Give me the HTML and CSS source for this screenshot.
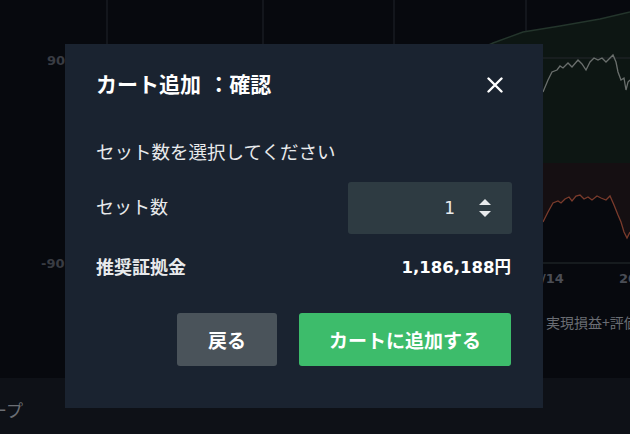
FILE: index.html
```html
<!DOCTYPE html>
<html lang="ja">
<head>
  <meta charset="UTF-8" />
  <meta name="viewport" content="width=device-width, initial-scale=1.0"/>
  <title>カート追加：確認</title>
  <link rel="stylesheet" href="styles.css">
</head>
<body>

  <div class="app">
    <div class="chart">
      <!-- 背景のチャート（モーダルの後ろ） -->
      <svg class="chart-svg" width="630" height="378" viewBox="0 0 630 378">
        <g class="grid">
          <line x1="107" y1="0" x2="107" y2="378"/>
          <line x1="263" y1="0" x2="263" y2="378"/>
          <line x1="394" y1="0" x2="394" y2="378"/>
          <line x1="526" y1="0" x2="526" y2="378"/>
        </g>
        <polygon class="area-up" points="478,50 493,43 523,32 560,26 600,19 630,12 630,163 478,163"/>
        <polyline class="edge-up" points="478,50 493,43 523,32 560,26 600,19 630,12"/>
        <line class="hline" x1="480" y1="58" x2="630" y2="58"/>
        <polygon class="area-down" points="543,163 630,163 630,232 627,238 624,232 621,222 618,215 614,205 610,196 606,200 601,198 597,196 592,200 588,197 584,199 580,195 576,196 572,201 569,197 565,199 561,203 558,201 553,203 548,212 543,222"/>
        <polyline class="line-gray" points="543,92 548,80 552,72 557,70 560,66 563,68 568,63 572,67 578,60 582,64 586,70 590,62 594,58 598,60 602,58 606,62 610,58 613,55 616,62 618,72 621,80 624,78 626,90 628,82 630,80"/>
        <polyline class="line-red" points="543,222 548,212 553,203 558,201 561,203 565,199 569,197 572,201 576,196 580,195 584,199 588,197 592,200 597,196 601,198 606,200 610,196 614,205 618,215 621,222 624,232 627,238 630,232"/>
        <line class="hline" x1="543" y1="263" x2="630" y2="263"/>
        <text class="axis" x="47" y="65">90</text>
        <text class="axis" x="41" y="268">-90</text>
        <text class="date" x="541" y="283">/14</text>
        <text class="date" x="619" y="283">20</text>
        <text class="legend" x="546" y="328">実現損益+評価</text>
      </svg>
    </div>
    <div class="tabbar"><span class="tab">ープ</span></div>
  </div>

  <div class="overlay">
    <div class="modal">
      <div class="modal-head">
        <h2 class="modal-title">カート追加 ：確認</h2>
        <button type="button" class="close" aria-label="閉じる">
          <svg width="16" height="16" viewBox="0 0 16 16">
            <path d="M1.5 1.5 L14.5 14.5 M14.5 1.5 L1.5 14.5" stroke="#fff" stroke-width="2.4" stroke-linecap="round"/>
          </svg>
        </button>
      </div>

      <p class="lead">セット数を選択してください</p>

      <div class="row">
        <span class="label">セット数</span>
        <div class="stepper">
          <span class="num">1</span>
          <svg class="spin" width="14" height="20" viewBox="0 0 14 20">
            <polygon points="1,7 7,1 13,7" fill="#e8eaec"/>
            <polygon points="1,13 13,13 7,19" fill="#e8eaec"/>
          </svg>
        </div>
      </div>

      <div class="row row-margin">
        <span class="label strong">推奨証拠金</span>
        <span class="amount">1,186,188円</span>
      </div>

      <div class="actions">
        <button type="button" class="btn back">戻る</button>
        <button type="button" class="btn add">カートに追加する</button>
      </div>
    </div>
  </div>

</body>
</html>
```

FILE: styles.css
```css
* {
  box-sizing: border-box;
}
body {
  margin: 0;
  width: 630px;
  height: 434px;
  overflow: hidden;
  position: relative;
  background: #07090e;
  color: #e8eaec;
  font-family: "DejaVu Sans", "Noto Sans CJK JP", sans-serif;
}
.app {
  height: 434px;
  display: flex;
  flex-direction: column;
}
.chart {
  height: 378px;
}
.chart-svg {
  display: block;
}
.grid line {
  stroke: #181b22;
  stroke-width: 1.5;
}
.area-up {
  fill: #0d1613;
}
.edge-up {
  fill: none;
  stroke: #24352c;
  stroke-width: 1.5;
}
.hline {
  stroke: #1d2224;
  stroke-width: 1.5;
}
.area-down {
  fill: #150f12;
}
.line-gray {
  fill: none;
  stroke: #6a6f6d;
  stroke-width: 1.3;
}
.line-red {
  fill: none;
  stroke: #7a3b2c;
  stroke-width: 1.3;
}
.axis {
  font-family: "DejaVu Sans", sans-serif;
  font-size: 13px;
  font-weight: bold;
  fill: #393c43;
}
.date {
  font-family: "DejaVu Sans", sans-serif;
  font-size: 13px;
  font-weight: bold;
  fill: #4a4d55;
}
.legend {
  font-family: "Noto Sans CJK JP", sans-serif;
  font-size: 14px;
  fill: #6a6d73;
}
.tabbar {
  flex: 1;
  background: #0e1117;
  padding-top: 19px;
  overflow: hidden;
}
.tab {
  display: inline-block;
  margin-left: -10px;
  font-family: "Noto Sans CJK JP", sans-serif;
  font-size: 17px;
  color: #6b6e74;
}

/* モーダル */
.overlay {
  position: absolute;
  inset: 0;
  padding: 44px 0 0 65px;
}
.modal {
  width: 478px;
  height: 364px;
  background: #1a2330;
  padding: 0 32px 0 31px;
}
.modal-head {
  display: flex;
  justify-content: space-between;
  align-items: center;
  padding-top: 27px;
}
.modal-title {
  margin: 0;
  font-size: 21px;
  line-height: 28px;
  font-weight: bold;
  color: #fff;
}
.close {
  width: 32px;
  height: 28px;
  padding: 0;
  border: none;
  background: none;
  display: flex;
  align-items: center;
  justify-content: center;
  cursor: pointer;
}
.lead {
  margin: 41px 0 0;
  font-size: 18.5px;
  line-height: 26px;
}
.row {
  display: flex;
  justify-content: space-between;
  align-items: center;
  margin-top: 16px;
}
.label {
  font-size: 18px;
  line-height: 26px;
}
.label.strong,
.amount {
  font-weight: bold;
}
.row-margin {
  margin-top: 21px;
}
.amount {
  font-size: 16.5px;
  line-height: 26px;
  color: #fff;
}
.stepper {
  width: 164px;
  height: 52px;
  margin-right: -1px;
  background: #2e3b42;
  border-radius: 3px;
  display: flex;
  justify-content: flex-end;
  align-items: center;
  gap: 23px;
  padding-right: 20px;
}
.num {
  font-size: 17px;
}
.actions {
  display: flex;
  justify-content: flex-end;
  gap: 22px;
  margin-top: 32px;
}
.btn {
  height: 53px;
  border: none;
  border-radius: 3px;
  font-family: "Noto Sans CJK JP", sans-serif;
  font-size: 19px;
  font-weight: bold;
  color: #fff;
  cursor: pointer;
}
.btn.back {
  width: 100px;
  background: #4a535a;
}
.btn.add {
  width: 212px;
  background: #3dbc6b;
}
```
